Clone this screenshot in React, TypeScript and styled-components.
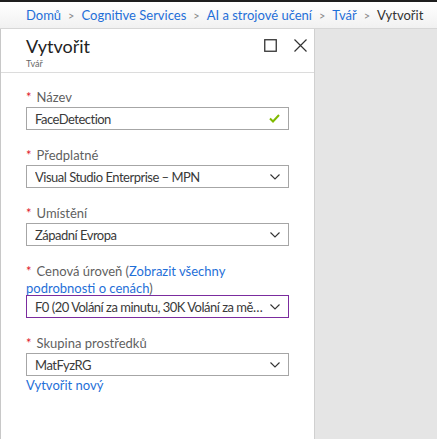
import React from 'react'
import styled, {createGlobalStyle} from 'styled-components'

const GlobalStyle = createGlobalStyle`
    html, body {
        margin: 0;
        padding: 0;
        height: 100%;
    }
    body {
        font-family: 'Segoe UI', Lato, 'Noto Sans', sans-serif;
        color: #333;
    }
    #root {
        height: 100%;
    }
`

const Page = styled.div`
    display: flex;
    flex-direction: column;
    height: 100%;
    border-top: 2px solid #1e1e1e;
    box-sizing: border-box;
`

const BreadcrumbBar = styled.nav`
    display: flex;
    align-items: center;
    height: 26px;
    padding-left: 26px;
    background: linear-gradient(#ffffff, #f1f1f1);
    border-bottom: 1px solid #d6d6d6;
    font-size: 13px;
    white-space: nowrap;
    flex-shrink: 0;
`

const Crumb = styled.a<{$current?: boolean}>`
    color: ${p => (p.$current ? '#333' : '#1f6fd8')};
    text-decoration: none;
`

const Separator = styled.span`
    color: #888;
    font-size: 11px;
    margin: 0 7px;
`

const Workspace = styled.div`
    flex: 1;
    display: flex;
    background: #e5e5e5;
    min-height: 0;
`

const Blade = styled.section`
    width: 315px;
    background: #fff;
    border-left: 1px solid #c8c8c8;
    border-right: 1px solid #d0d0d0;
    box-sizing: border-box;
    display: flex;
    flex-direction: column;
`

const BladeHeader = styled.header`
    display: flex;
    justify-content: space-between;
    height: 44px;
    padding: 5px 7px 0 25px;
    border-bottom: 1px solid #dcdcdc;
    box-sizing: border-box;
`

const Titles = styled.div`
    display: flex;
    flex-direction: column;
`

const Title = styled.h1`
    margin: 0;
    font-size: 18px;
    font-weight: 400;
    line-height: 24px;
    color: #222;
`

const Subtitle = styled.div`
    font-size: 9px;
    line-height: 12px;
    color: #666;
`

const HeaderActions = styled.div`
    display: flex;
    gap: 17px;
    padding-top: 4px;
`

const IconButton = styled.button`
    width: 13px;
    height: 14px;
    padding: 0;
    border: 0;
    background: none;
    display: flex;
    align-items: center;
    justify-content: center;
    cursor: pointer;
`

const Form = styled.div`
    padding: 16px 25px 0 25px;
    display: flex;
    flex-direction: column;
`

const Field = styled.div`
    display: flex;
    flex-direction: column;
    margin-bottom: 17px;
`

const Label = styled.label<{$tight?: boolean}>`
    font-size: 13px;
    line-height: 17px;
    color: #5f5f5f;
    margin-bottom: ${p => (p.$tight ? '-2px' : '1px')};
`

const Required = styled.span`
    color: #e0162b;
    margin-right: 5px;
`

const Link = styled.a`
    color: #1f6fd8;
    text-decoration: none;
`

const Box = styled.div<{$focused?: boolean}>`
    height: 23px;
    box-sizing: border-box;
    border: 1px solid ${p => (p.$focused ? '#7b2c9e' : '#a6a6a6')};
    display: flex;
    align-items: center;
    padding: 0 8px 0 8px;
    font-size: 13px;
    letter-spacing: -0.5px;
    color: #3a3a3a;
    gap: 3px;
`

const BoxText = styled.span`
    flex: 1;
    min-width: 0;
    white-space: nowrap;
    overflow: hidden;
    text-overflow: ellipsis;
`

const CreateLink = styled(Link)`
    font-size: 13px;
    line-height: 17px;
    margin-top: 1px;
`

const Chevron = () => (
    <svg width="10" height="6" viewBox="0 0 10 6">
        <polyline points="0.5,0.5 5,5 9.5,0.5" fill="none" stroke="#333" strokeWidth="1.1" />
    </svg>
)

const Check = () => (
    <svg width="11" height="9" viewBox="0 0 11 9">
        <polyline points="1,4.5 4,7.5 10,1" fill="none" stroke="#7fba00" strokeWidth="2" />
    </svg>
)

function SelectBox({value, focused}: {value: string; focused?: boolean}) {
    return (
        <Box $focused={focused}>
            <BoxText>{value}</BoxText>
            <Chevron />
        </Box>
    )
}

export default function App() {
    return (
        <>
            <GlobalStyle />
            <Page>
                <BreadcrumbBar>
                    <Crumb href="#">Domů</Crumb>
                    <Separator>&gt;</Separator>
                    <Crumb href="#">Cognitive Services</Crumb>
                    <Separator>&gt;</Separator>
                    <Crumb href="#">AI a strojové učení</Crumb>
                    <Separator>&gt;</Separator>
                    <Crumb href="#">Tvář</Crumb>
                    <Separator>&gt;</Separator>
                    <Crumb $current>Vytvořit</Crumb>
                </BreadcrumbBar>
                <Workspace>
                    <Blade>
                        <BladeHeader>
                            <Titles>
                                <Title>Vytvořit</Title>
                                <Subtitle>Tvář</Subtitle>
                            </Titles>
                            <HeaderActions>
                                <IconButton aria-label="Maximalizovat">
                                    <svg width="13" height="13" viewBox="0 0 13 13">
                                        <rect x="0.75" y="0.75" width="11.5" height="11.5" fill="none" stroke="#333" strokeWidth="1.3" />
                                    </svg>
                                </IconButton>
                                <IconButton aria-label="Zavřít">
                                    <svg width="13" height="13" viewBox="0 0 13 13">
                                        <path d="M0.5 0.5 L12.5 12.5 M12.5 0.5 L0.5 12.5" stroke="#333" strokeWidth="1.2" />
                                    </svg>
                                </IconButton>
                            </HeaderActions>
                        </BladeHeader>
                        <Form>
                            <Field>
                                <Label><Required>*</Required>Název</Label>
                                <Box>
                                    <BoxText>FaceDetection</BoxText>
                                    <Check />
                                </Box>
                            </Field>
                            <Field>
                                <Label><Required>*</Required>Předplatné</Label>
                                <SelectBox value="Visual Studio Enterprise – MPN" />
                            </Field>
                            <Field>
                                <Label><Required>*</Required>Umístění</Label>
                                <SelectBox value="Západní Evropa" />
                            </Field>
                            <Field>
                                <Label $tight>
                                    <Required>*</Required>
                                    <span>Cenová úroveň (</span>
                                    <Link href="#">
                                        <span>Zobrazit všechny </span>
                                        <span>podrobnosti o cenách</span>
                                    </Link>
                                    <span>)</span>
                                </Label>
                                <SelectBox focused value="F0 (20 Volání za minutu, 30K Volání za měsíc)" />
                            </Field>
                            <Field>
                                <Label><Required>*</Required>Skupina prostředků</Label>
                                <SelectBox value="MatFyzRG" />
                                <CreateLink href="#">Vytvořit nový</CreateLink>
                            </Field>
                        </Form>
                    </Blade>
                </Workspace>
            </Page>
        </>
    )
}
